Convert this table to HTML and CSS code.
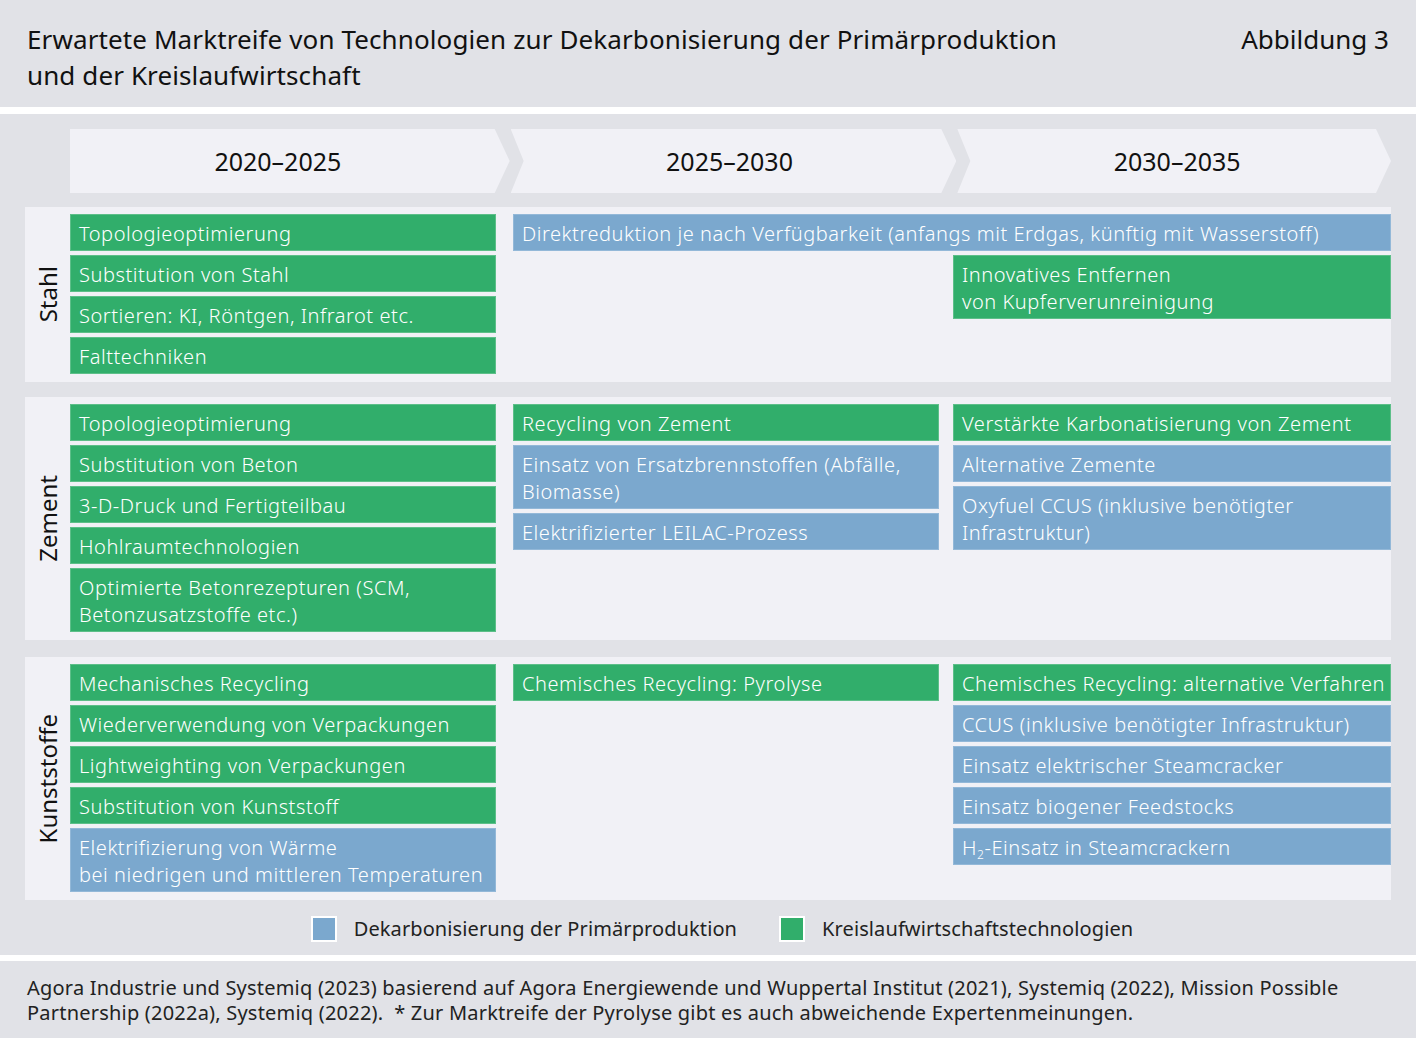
FILE: index.html
```html
<!DOCTYPE html>
<html lang="de">
<head>
<meta charset="utf-8">
<title>Abbildung 3</title>
<link rel="stylesheet" href="styles.css">
</head>
<body>
<header class="head">
  <h1 class="title">Erwartete Marktreife von Technologien zur Dekarbonisierung der Primärproduktion<br>und der Kreislaufwirtschaft</h1>
  <div class="fig">Abbildung 3</div>
</header>
<main class="chart">
  <div class="arrows">
    <div class="arrow a1">2020–2025</div>
    <div class="arrow a2">2025–2030</div>
    <div class="arrow a3">2030–2035</div>
  </div>

  <section class="panel stahl">
    <div class="label"><span>Stahl</span></div>
    <div class="col col1">
      <div class="box g">Topologieoptimierung</div>
      <div class="box g">Substitution von Stahl</div>
      <div class="box g">Sortieren: KI, Röntgen, Infrarot etc.</div>
      <div class="box g">Falttechniken</div>
    </div>
    <div class="rest">
      <div class="box b span2">Direktreduktion je nach Verfügbarkeit (anfangs mit Erdgas, künftig mit Wasserstoff)</div>
      <div class="box g right">Innovatives Entfernen<br>von Kupferverunreinigung</div>
    </div>
  </section>

  <section class="panel zement">
    <div class="label"><span>Zement</span></div>
    <div class="col col1">
      <div class="box g">Topologieoptimierung</div>
      <div class="box g">Substitution von Beton</div>
      <div class="box g">3-D-Druck und Fertigteilbau</div>
      <div class="box g">Hohlraumtechnologien</div>
      <div class="box g">Optimierte Betonrezepturen (SCM,<br>Betonzusatzstoffe etc.)</div>
    </div>
    <div class="col col2">
      <div class="box g">Recycling von Zement</div>
      <div class="box b">Einsatz von Ersatzbrennstoffen (Abfälle,<br>Biomasse)</div>
      <div class="box b">Elektrifizierter LEILAC-Prozess</div>
    </div>
    <div class="col col3">
      <div class="box g">Verstärkte Karbonatisierung von Zement</div>
      <div class="box b">Alternative Zemente</div>
      <div class="box b">Oxyfuel CCUS (inklusive benötigter<br>Infrastruktur)</div>
    </div>
  </section>

  <section class="panel kunst">
    <div class="label"><span>Kunststoffe</span></div>
    <div class="col col1">
      <div class="box g">Mechanisches Recycling</div>
      <div class="box g">Wiederverwendung von Verpackungen</div>
      <div class="box g">Lightweighting von Verpackungen</div>
      <div class="box g">Substitution von Kunststoff</div>
      <div class="box b">Elektrifizierung von Wärme<br>bei niedrigen und mittleren Temperaturen</div>
    </div>
    <div class="col col2">
      <div class="box g">Chemisches Recycling: Pyrolyse</div>
    </div>
    <div class="col col3">
      <div class="box g">Chemisches Recycling: alternative Verfahren</div>
      <div class="box b">CCUS (inklusive benötigter Infrastruktur)</div>
      <div class="box b">Einsatz elektrischer Steamcracker</div>
      <div class="box b">Einsatz biogener Feedstocks</div>
      <div class="box b">H<sub>2</sub>-Einsatz in Steamcrackern</div>
    </div>
  </section>

  <div class="legend">
    <div class="leg-item"><span class="swatch sb"></span>Dekarbonisierung der Primärproduktion</div>
    <div class="leg-item"><span class="swatch sg"></span>Kreislaufwirtschaftstechnologien</div>
  </div>
</main>
<footer class="foot">
  Agora Industrie und Systemiq (2023) basierend auf Agora Energiewende und Wuppertal Institut (2021), Systemiq (2022), Mission Possible<br>Partnership (2022a), Systemiq (2022).&nbsp; * Zur Marktreife der Pyrolyse gibt es auch abweichende Expertenmeinungen.
</footer>
</body>
</html>
```

FILE: styles.css
```css
* { box-sizing: border-box; }

html, body {
  margin: 0;
  padding: 0;
  background: #ffffff;
}

body {
  width: 1416px;
  font-family: "Noto Sans", "DejaVu Sans", sans-serif;
  color: #111;
}

.head {
  background: #e1e2e7;
  height: 107px;
  padding: 21px 27px 0 27px;
  display: flex;
  justify-content: space-between;
  align-items: flex-start;
}

.title {
  margin: 0;
  font-weight: 400;
  font-size: 26px;
  line-height: 36px;
  letter-spacing: 0.11px;
  color: #111;
}

.fig {
  font-size: 26px;
  line-height: 36px;
  color: #111;
}

.chart {
  margin-top: 7px;
  background: #e1e2e7;
  padding: 15px 25px 0 25px;
  height: 841px;
}

.arrows {
  display: flex;
  margin-left: 45px;
  height: 64px;
}

.arrow {
  background: #f1f1f6;
  height: 64px;
  display: flex;
  align-items: center;
  justify-content: center;
  font-size: 25px;
  color: #111;
}

.a1 {
  width: 440px;
  padding-right: 24px;
  clip-path: polygon(0 0, calc(100% - 15px) 0, 100% 50%, calc(100% - 15px) 100%, 0 100%);
}

.a2 {
  width: 446px;
  margin-left: 1px;
  padding-right: 8px;
  clip-path: polygon(0 0, calc(100% - 15px) 0, 100% 50%, calc(100% - 15px) 100%, 0 100%, 13px 50%);
}

.a3 {
  width: 434px;
  margin-left: 1px;
  padding-left: 6px;
  clip-path: polygon(0 0, calc(100% - 15px) 0, 100% 50%, calc(100% - 15px) 100%, 0 100%, 13px 50%);
}

.panel {
  background: #f1f1f6;
  display: flex;
  align-items: flex-start;
  padding: 7px 0;
  width: 1366px;
}

.stahl { margin-top: 14px; height: 175px; }
.zement { margin-top: 15px; height: 243px; }
.kunst { margin-top: 17px; height: 243px; }

.label {
  width: 45px;
  align-self: stretch;
  display: flex;
  align-items: center;
  justify-content: center;
}

.label span {
  writing-mode: vertical-rl;
  transform: rotate(180deg);
  font-size: 24px;
  color: #111;
  line-height: 1;
}

.col {
  display: flex;
  flex-direction: column;
  gap: 4px;
}

.col1 { width: 426px; }
.col2 { width: 426px; margin-left: 17px; }
.col3 { width: 438px; margin-left: 14px; }

.rest {
  margin-left: 17px;
  width: 878px;
  display: grid;
  grid-template-columns: 426px 438px;
  column-gap: 14px;
  row-gap: 4px;
}

.span2 { grid-column: 1 / 3; }
.right { grid-column: 2; }

.box {
  color: #ffffff;
  font-size: 20px;
  line-height: 27px;
  letter-spacing: 0.55px;
  padding: 6px 0 4px 9px;
  white-space: nowrap;
  font-weight: 300;
}

.g {
  background: #31ae6b;
  box-shadow: inset 0 0 0 1px #5dbf89;
}

.b {
  background: #7ba8ce;
  box-shadow: inset 0 0 0 1px #93b8d8;
}

.box sub {
  font-size: 12px;
  line-height: 0;
  vertical-align: -4px;
}

.legend {
  display: flex;
  justify-content: center;
  align-items: center;
  gap: 42px;
  height: 57px;
  padding-left: 28px;
  font-size: 20px;
  letter-spacing: 0.1px;
  color: #222;
}

.leg-item {
  display: flex;
  align-items: center;
}

.swatch {
  width: 26px;
  height: 26px;
  border: 2px solid #ffffff;
  margin-right: 17px;
}

.sb { background: #7ba8ce; }
.sg { background: #31ae6b; }

.foot {
  margin-top: 6px;
  background: #e1e2e7;
  height: 77px;
  padding: 14px 27px 0 27px;
  font-size: 20px;
  line-height: 25px;
  letter-spacing: 0.21px;
  color: #222;
}
```
